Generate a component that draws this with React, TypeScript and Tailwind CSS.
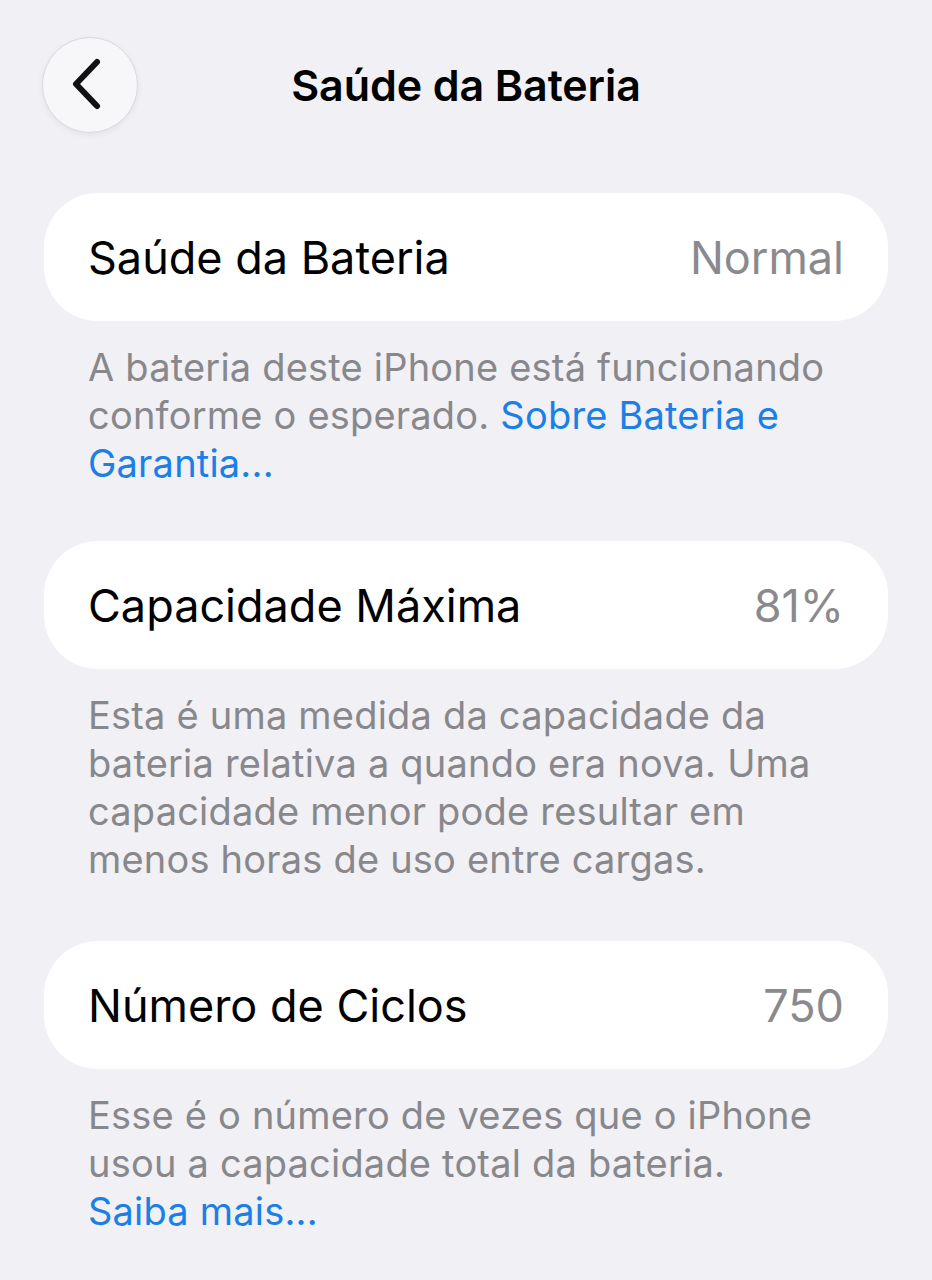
const FONT = { fontFamily: 'Inter, "Noto Sans", sans-serif' }

interface Row {
  label: string
  value: string
  lines: React.ReactNode[]
}

const LINK = 'text-[#1a7fe6]'

const ROWS: Row[] = [
  {
    label: 'Saúde da Bateria',
    value: 'Normal',
    lines: [
      'A bateria deste iPhone está funcionando',
      <>conforme o esperado. <span className={LINK}>Sobre Bateria e</span></>,
      <span className={LINK}>Garantia...</span>
    ]
  },
  {
    label: 'Capacidade Máxima',
    value: '81%',
    lines: [
      'Esta é uma medida da capacidade da',
      'bateria relativa a quando era nova. Uma',
      'capacidade menor pode resultar em',
      'menos horas de uso entre cargas.'
    ]
  },
  {
    label: 'Número de Ciclos',
    value: '750',
    lines: [
      'Esse é o número de vezes que o iPhone',
      'usou a capacidade total da bateria.',
      <span className={LINK}>Saiba mais...</span>
    ]
  }
]

function BackButton(): JSX.Element {
  return (
    <button
      type="button"
      className="flex h-[96px] w-[96px] items-center justify-center rounded-full border border-[#d9d9de] bg-[#f7f7f9] shadow-[0_2px_6px_rgba(0,0,0,0.06)]"
    >
      <svg width="40" height="56" viewBox="0 0 40 56" fill="none">
        <path d="M27 5 L6 27 L27 49" stroke="#111" strokeWidth="6" strokeLinecap="round" strokeLinejoin="round" />
      </svg>
    </button>
  )
}

export default function App(): JSX.Element {
  return (
    <div className="min-h-[1280px] w-full bg-[#f0f0f5] px-[44px]" style={FONT}>
      {/* Nav bar */}
      <div className="relative flex h-[170px] items-start pt-[37px]">
        <div className="-ml-[2px]">
          <BackButton />
        </div>
        <h1 className="absolute left-0 right-0 top-[58px] text-center text-[43px] font-semibold leading-[54px] tracking-[-0.1px] text-black">
          Saúde da Bateria
        </h1>
      </div>

      <div className="mt-[23px] flex flex-col">
        {ROWS.map((row, i) => (
          <div key={row.label} className={i === 0 ? '' : i === 1 ? 'mt-[54px]' : 'mt-[58px]'}>
            <div className="flex h-[128px] items-center justify-between rounded-[54px] bg-white px-[44px]">
              <span className="text-[45px] leading-none text-black">{row.label}</span>
              <span className="text-[45px] leading-none text-[#8a8a8e]">{row.value}</span>
            </div>
            <p className="px-[44px] pt-[22px] text-[38px] leading-[48px] tracking-[0.2px] text-[#88888c]">
              {row.lines.map((line, j) => (
                <span key={j} className="block whitespace-nowrap">{line}</span>
              ))}
            </p>
          </div>
        ))}
      </div>
    </div>
  )
}
